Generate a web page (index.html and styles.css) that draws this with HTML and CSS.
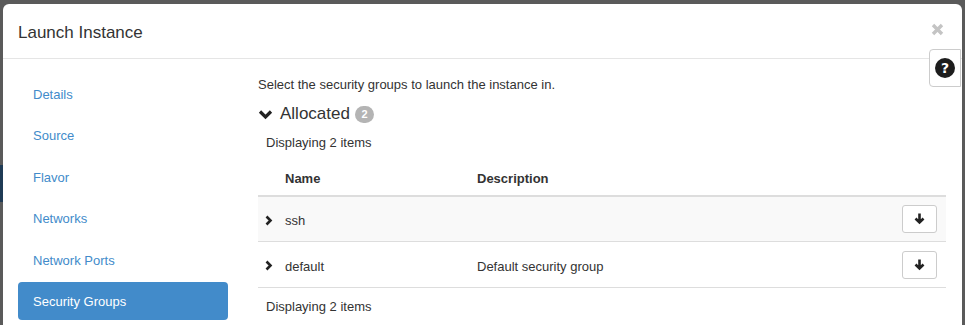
FILE: index.html
```html
<!DOCTYPE html>
<html lang="en">
<head>
  <meta charset="UTF-8">
  <title>Launch Instance</title>
  <link rel="stylesheet" href="styles.css">
</head>
<body>

  <div class="modal">
    <div class="modal-header">
      <h4 class="modal-title">Launch Instance</h4>
      <button class="close-btn" aria-label="Close">
        <svg width="13" height="13" viewBox="0 0 13 13"><path d="M2 2 L11 11 M11 2 L2 11" stroke="currentColor" stroke-width="3.4"/></svg>
      </button>
    </div>

    <button class="help-btn" aria-label="Help"><span class="help-icon">?</span></button>

    <div class="modal-body">
      <!-- Wizard steps -->
      <ul class="wizard-nav">
        <li><a href="#">Details</a></li>
        <li><a href="#">Source</a></li>
        <li><a href="#">Flavor</a></li>
        <li><a href="#">Networks</a></li>
        <li><a href="#">Network Ports</a></li>
        <li class="active"><a href="#">Security Groups</a></li>
      </ul>

      <div class="step">
        <p class="step-help">Select the security groups to launch the instance in.</p>

        <div class="section-title">
          <svg class="chevron-down" width="15" height="11" viewBox="0 0 15 11"><path d="M2 2.5 L7.5 8 L13 2.5" fill="none" stroke="currentColor" stroke-width="3.2"/></svg>
          <span>Allocated</span>
          <span class="badge">2</span>
        </div>

        <div class="table-info">Displaying 2 items</div>

        <div class="sg-table">
          <div class="sg-row sg-head">
            <div class="cell"></div>
            <div class="cell">Name</div>
            <div class="cell">Description</div>
            <div class="cell"></div>
          </div>
          <div class="sg-row striped">
            <div class="cell toggle">
              <svg width="8" height="11" viewBox="0 0 8 11"><path d="M1.5 1.5 L5.5 5.5 L1.5 9.5" fill="none" stroke="currentColor" stroke-width="2.6"/></svg>
            </div>
            <div class="cell">ssh</div>
            <div class="cell"></div>
            <div class="cell action">
              <button class="move-btn" aria-label="Deallocate">
                <svg width="11" height="12" viewBox="0 0 11 12"><path d="M5.5 0.5 V9 M1.5 5.5 L5.5 9.5 L9.5 5.5" fill="none" stroke="currentColor" stroke-width="2.6"/></svg>
              </button>
            </div>
          </div>
          <div class="sg-row">
            <div class="cell toggle">
              <svg width="8" height="11" viewBox="0 0 8 11"><path d="M1.5 1.5 L5.5 5.5 L1.5 9.5" fill="none" stroke="currentColor" stroke-width="2.6"/></svg>
            </div>
            <div class="cell">default</div>
            <div class="cell">Default security group</div>
            <div class="cell action">
              <button class="move-btn" aria-label="Deallocate">
                <svg width="11" height="12" viewBox="0 0 11 12"><path d="M5.5 0.5 V9 M1.5 5.5 L5.5 9.5 L9.5 5.5" fill="none" stroke="currentColor" stroke-width="2.6"/></svg>
              </button>
            </div>
          </div>
        </div>

        <div class="table-info footer">Displaying 2 items</div>
      </div>
    </div>
  </div>

</body>
</html>
```

FILE: styles.css
```css
html, body {
  height: 100%;
}
body {
  margin: 0;
  padding: 4px 3px 0 3px;
  overflow: hidden;
  font-family: "Liberation Sans", Arial, Helvetica, sans-serif;
  font-size: 13px;
  line-height: 18px;
  color: #333;
  background: linear-gradient(to bottom, #5a5a5a 0, #5a5a5a 165px, #1f3b55 165px, #1f3b55 202px, #5a5a5a 202px) no-repeat 0 0 / 3px 100%, #5a5a5a;
  box-sizing: border-box;
}
.modal {
  position: relative;
  width: 959px;
  height: 340px;
  background-color: white;
  border-radius: 6px 6px 0 0;
}
.modal-header {
  display: flex;
  align-items: center;
  justify-content: space-between;
  padding: 17px 15px 13px;
  border-bottom: 1px solid #e5e5e5;
}
.modal-title {
  margin: 0;
  font-size: 17px;
  font-weight: normal;
  line-height: 24px;
}
.close-btn {
  margin: -8px 3px 0 0;
  padding: 0;
  border: none;
  background: none;
  color: #c4c4c4;
  display: flex;
}
.help-btn {
  position: absolute;
  top: 45px;
  right: 1px;
  width: 32px;
  height: 38px;
  padding: 0;
  background-color: white;
  border: 1px solid #ccc;
  border-radius: 4px 0 0 4px;
  display: flex;
  align-items: center;
  justify-content: center;
}
.help-icon {
  width: 20px;
  height: 20px;
  border-radius: 50%;
  background-color: #1d1d1d;
  color: white;
  font-family: "DejaVu Sans", sans-serif;
  font-weight: bold;
  font-size: 14px;
  line-height: 20px;
  text-align: center;
}
.modal-body {
  display: flex;
  gap: 30px;
  padding: 16px 15px 0 15px;
}
.wizard-nav {
  list-style: none;
  margin: 0;
  padding: 0;
  width: 210px;
  flex-shrink: 0;
  display: flex;
  flex-direction: column;
  gap: 3.4px;
}
.wizard-nav a {
  display: block;
  height: 38px;
  line-height: 36px;
  padding: 2px 15px 0;
  box-sizing: border-box;
  color: #428bca;
  text-decoration: none;
  border-radius: 4px;
}
.wizard-nav .active a {
  background-color: #428bca;
  color: white;
}
.step {
  flex: 1;
  padding-right: 1px;
}
.step-help {
  margin: 1px 0 0;
}
.section-title {
  display: flex;
  align-items: center;
  margin-top: 8px;
  font-size: 17px;
  line-height: 24px;
}
.chevron-down {
  color: #222;
  margin-right: 7px;
}
.badge {
  display: inline-block;
  margin-left: 5px;
  min-width: 19px;
  height: 17px;
  border-radius: 9px;
  background-color: #b4b4b4;
  color: white;
  font-size: 11px;
  font-weight: bold;
  line-height: 17px;
  text-align: center;
}
.table-info {
  padding: 8px;
}
.table-info.footer {
  padding-top: 10px;
}
.sg-row {
  display: grid;
  grid-template-columns: 19px 192px 1fr 52px;
  align-items: center;
  min-height: 45px;
  border-bottom: 1px solid #ddd;
}
.sg-table {
  width: 688px;
}
.sg-row.striped {
  background-color: #f9f9f9;
  min-height: 44px;
}
.sg-head {
  min-height: 0;
  font-weight: bold;
  border-bottom: 2px solid #ddd;
}
.cell {
  padding: 10px 8px 6px;
}
.sg-head .cell {
  padding: 10px 8px 7px;
}
.cell.toggle {
  padding: 2px 0 0 7px;
  display: flex;
  color: #222;
}
.cell.action {
  display: flex;
  justify-content: flex-end;
  padding: 0 9px 0 0;
}
.move-btn {
  width: 35px;
  height: 28px;
  padding: 0;
  background-color: white;
  border: 1px solid #ccc;
  border-radius: 3px;
  color: #222;
  display: flex;
  align-items: center;
  justify-content: center;
}
```
